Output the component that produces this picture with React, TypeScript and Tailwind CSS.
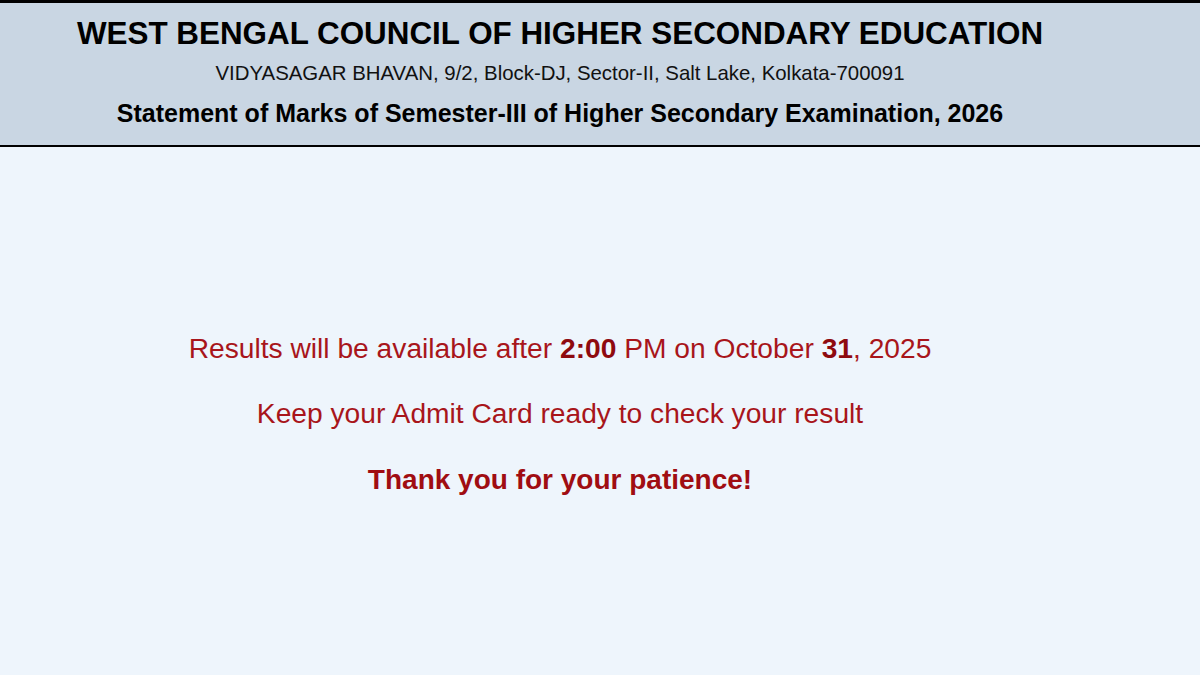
export default function App() {
  return (
    <div className="min-h-[675px] w-[1200px] bg-[#eef5fc] font-['Liberation_Sans',Arial,sans-serif]">
      {/* header band */}
      <header className="border-t-[3px] border-b-2 border-black bg-[#c9d6e3]">
        <div className="flex w-[1120px] flex-col items-center pt-[13px] pb-[17px] text-black">
          <h1 className="text-[31.4px] font-bold leading-[36px]">WEST BENGAL COUNCIL OF HIGHER SECONDARY EDUCATION</h1>
          <p className="mt-[9px] text-[20.4px] leading-[24px] text-[#111]">
            VIDYASAGAR BHAVAN, 9/2, Block-DJ, Sector-II, Salt Lake, Kolkata-700091
          </p>
          <h2 className="mt-[13px] text-[25px] font-bold leading-[30px]">
            Statement of Marks of Semester-III of Higher Secondary Examination, 2026
          </h2>
        </div>
      </header>

      <main className="flex w-[1120px] flex-col items-center pt-[183px] text-[#a8151b]">
        <p className="text-[28.2px] leading-[36px]">
          Results will be available after <b className="text-[#8e0a0f]">2:00</b> PM on October{" "}
          <b className="text-[#8e0a0f]">31</b>, 2025
        </p>
        <p className="mt-[29px] text-[28.2px] leading-[36px]">Keep your Admit Card ready to check your result</p>
        <p className="mt-[31px] text-[28px] font-bold leading-[36px] text-[#a00d12]">Thank you for your patience!</p>
      </main>
    </div>
  );
}
